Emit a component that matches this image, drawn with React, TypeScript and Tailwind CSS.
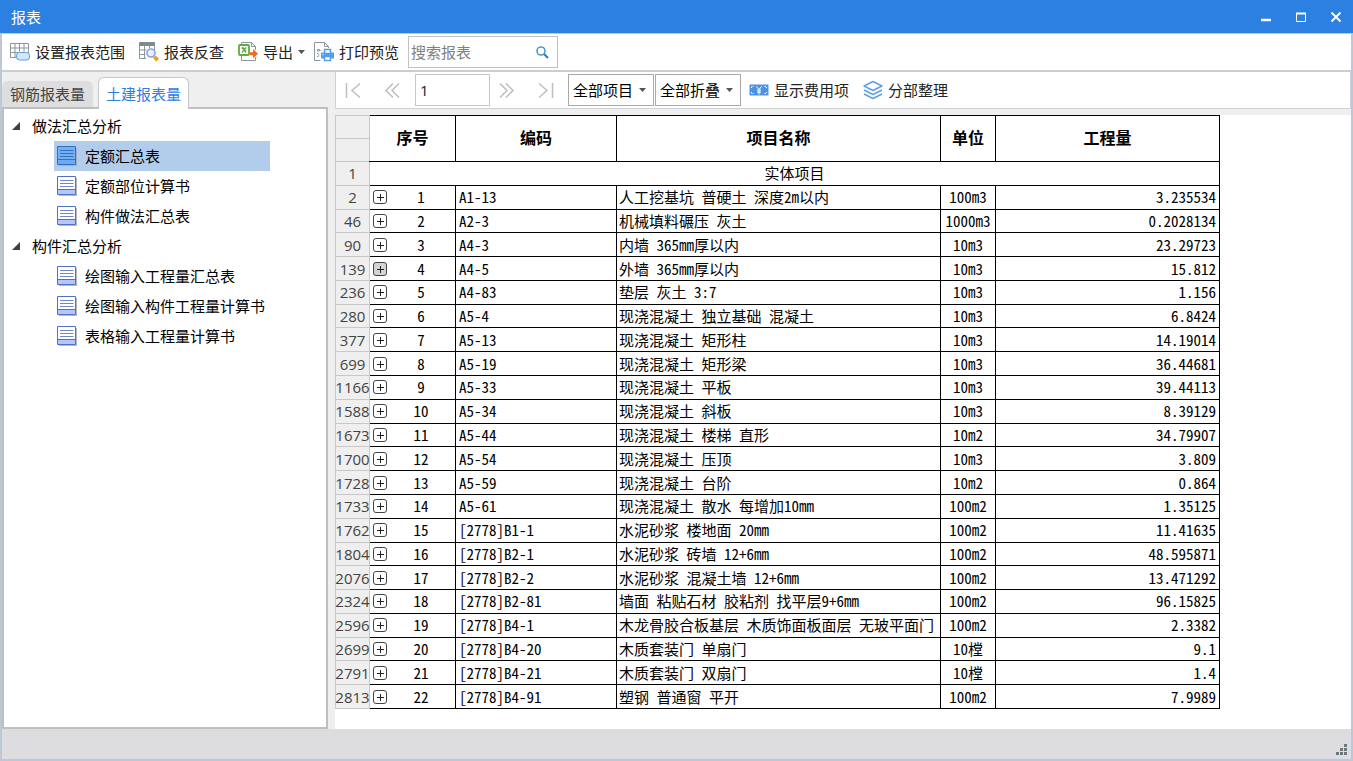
import { useState } from 'react';
import type { ReactNode } from 'react';
import clsx from 'clsx';

const TREE = [
  { title: '做法汇总分析', items: ['定额汇总表', '定额部位计算书', '构件做法汇总表'] },
  { title: '构件汇总分析', items: ['绘图输入工程量汇总表', '绘图输入构件工程量计算书', '表格输入工程量计算书'] },
];

// sheet row, code, name, unit, quantity
const ROWS: [number, string, string, string, string][] = [
  [2, 'A1-13', '人工挖基坑 普硬土 深度2m以内', '100m3', '3.235534'],
  [46, 'A2-3', '机械填料碾压 灰土', '1000m3', '0.2028134'],
  [90, 'A4-3', '内墙 365mm厚以内', '10m3', '23.29723'],
  [139, 'A4-5', '外墙 365mm厚以内', '10m3', '15.812'],
  [236, 'A4-83', '垫层 灰土 3:7', '10m3', '1.156'],
  [280, 'A5-4', '现浇混凝土 独立基础 混凝土', '10m3', '6.8424'],
  [377, 'A5-13', '现浇混凝土 矩形柱', '10m3', '14.19014'],
  [699, 'A5-19', '现浇混凝土 矩形梁', '10m3', '36.44681'],
  [1166, 'A5-33', '现浇混凝土 平板', '10m3', '39.44113'],
  [1588, 'A5-34', '现浇混凝土 斜板', '10m3', '8.39129'],
  [1673, 'A5-44', '现浇混凝土 楼梯 直形', '10m2', '34.79907'],
  [1700, 'A5-54', '现浇混凝土 压顶', '10m3', '3.809'],
  [1728, 'A5-59', '现浇混凝土 台阶', '10m2', '0.864'],
  [1733, 'A5-61', '现浇混凝土 散水 每增加10mm', '100m2', '1.35125'],
  [1762, '[2778]B1-1', '水泥砂浆 楼地面 20mm', '100m2', '11.41635'],
  [1804, '[2778]B2-1', '水泥砂浆 砖墙 12+6mm', '100m2', '48.595871'],
  [2076, '[2778]B2-2', '水泥砂浆 混凝土墙 12+6mm', '100m2', '13.471292'],
  [2324, '[2778]B2-81', '墙面 粘贴石材 胶粘剂 找平层9+6mm', '100m2', '96.15825'],
  [2596, '[2778]B4-1', '木龙骨胶合板基层 木质饰面板面层 无玻平面门', '100m2', '2.3382'],
  [2699, '[2778]B4-20', '木质套装门 单扇门', '10樘', '9.1'],
  [2791, '[2778]B4-21', '木质套装门 双扇门', '10樘', '1.4'],
  [2813, '[2778]B4-91', '塑钢 普通窗 平开', '100m2', '7.9989'],
];

const HOVERED_ROW = 139;

function RangeIcon() {
  return (
    <svg width="20" height="20" viewBox="0 0 20 20" fill="none" aria-hidden="true">
      <path d="M.5 1.5h18v11M.5 1.5v14h6M.5 6h18M.5 10.5h8M5 1.5v14M9.5 1.5v8M14 1.5v8" stroke="#8a979d" />
      <rect x="6.5" y="10.5" width="13" height="7.5" rx="3" fill="#d3e6fb" stroke="#5b9be6" />
    </svg>
  );
}

function LookupIcon() {
  return (
    <svg width="20" height="20" viewBox="0 0 20 20" fill="none" aria-hidden="true">
      <path d="M.5 .5h15v3H.5z" fill="#7c8b92" stroke="#7c8b92" />
      <path d="M.5 3.5v13H7M.5 8h7M.5 12.5h6M5.5 3.5v13M10.5 3.5v3M15.5 3.5V8" stroke="#8a979d" />
      <circle cx="12" cy="11" r="4" fill="#e6effc" stroke="#8e9fe0" strokeWidth="1.6" />
      <path d="m14 16 2.600-2.600 3.400 3.400-2.600 2.600z" fill="#f39a1c" />
    </svg>
  );
}

function ExportIcon() {
  return (
    <svg width="20" height="20" viewBox="0 0 20 20" fill="none" aria-hidden="true">
      <path d="M3.500 3V.500h10l4 4V8M13.500.500v4h4M3.500 14v4.500h14V15" stroke="#8a979d" />
      <rect x="1" y="3" width="10" height="10" rx="1" fill="#fff" stroke="#62a944" strokeWidth="1.800" />
      <path d="m3.800 5.500 4.500 5M8.300 5.500l-4.500 5M5 5.500l3 3.500" stroke="#62a944" strokeWidth="1.300" />
      <path d="M12 10.200h3V7l5 4.700-5 4.700v-3.200h-3z" fill="#f2691f" />
    </svg>
  );
}

function PrintPreviewIcon() {
  return (
    <svg width="20" height="20" viewBox="0 0 20 20" fill="none" aria-hidden="true">
      <path d="M14.500 6V4.500l-4-4H.500v18h6M10.500.500v4h4" stroke="#8a979d" />
      <path d="M3.500 7.500h2v1.500h-2zM3 11.500h1.500M5.500 13H4M3 14.500h1.500M7.500 8.500H6.500" stroke="#8a979d" />
      <path d="M7 10.500h13v6H7z" fill="#559de8" />
      <path d="M10.500 7.500h6v4h-6zM10.500 14.500h6v4h-6z" fill="#fff" stroke="#559de8" strokeWidth="1.500" />
      <path d="M8.500 12.700h1.200" stroke="#fff" />
    </svg>
  );
}

function MoneyIcon() {
  return (
    <svg width="20" height="20" viewBox="0 0 20 20" fill="none" aria-hidden="true">
      <path d="M.500 4.500h19v11H.500z" fill="#4a94e6" />
      <path d="M2.500 8V6.500h2M15.500 6.500h2V8M2.500 12v1.500h2M15.500 13.500h2V12" stroke="#fff" strokeDasharray="1.500 1" />
      <path d="M7.500 6.500 10 9.500l2.500-3M10 9.500v5M8 10.200h4M8 12.200h4" stroke="#fff" />
    </svg>
  );
}

function LayersIcon() {
  return (
    <svg width="20" height="20" viewBox="0 0 20 20" fill="none" stroke="#5b9fe8" strokeWidth="1.400" strokeLinejoin="round" aria-hidden="true">
      <path d="m10 1.500 9 4.500-9 4.500L1 6z" />
      <path d="m1 10 9 4.500 9-4.500M1 14l9 4.500 9-4.500" />
    </svg>
  );
}

function ReportIcon({ active }: { active: boolean }) {
  return (
    <svg width="20" height="20" viewBox="0 0 20 20" fill="none" aria-hidden="true">
      <path d="M2 20h18V2" stroke="#9aa3b5" strokeWidth="1.500" />
      <path d="M.500.500h18v18H.500z" fill={active ? '#74b0f2' : '#fff'} />
      <path d="M1 13.500h17.500v5H1z" fill={active ? '#6cabf3' : '#b5c6fa'} />
      <path d="M.500.500h18v18H.500zM.500 13.500h18" stroke={active ? '#2f72bd' : '#5070c4'} />
      <path d="M3 4.500h13.500M3 7.500h13.500M3 10.500h13.500" stroke={active ? '#2f72bd' : '#6f86c4'} />
    </svg>
  );
}

function Caret() {
  return (
    <svg width="7" height="4" viewBox="0 0 7 4" aria-hidden="true">
      <path d="M0 0h7L3.500 4z" fill="#555" />
    </svg>
  );
}

function ToolButton({ icon, label, caret }: { icon: ReactNode; label: string; caret?: boolean }) {
  return (
    <button
      type="button"
      className={clsx('flex h-8 items-center gap-[5px] whitespace-nowrap rounded-sm pl-[5px] hover:bg-gray-100', !caret && 'pr-[5px]')}
    >
      {icon}
      <span>{label}</span>
      {caret && <Caret />}
    </button>
  );
}

function NavButton({ label, d }: { label: string; d: string }) {
  return (
    <button type="button" aria-label={label} className="flex h-8 w-9 items-center pl-2">
      <svg width="17" height="17" viewBox="0 0 17 17" fill="none" stroke="#bcbec0" strokeWidth="1.500">
        <path d={d} />
      </svg>
    </button>
  );
}

function FilterSelect({ label, options }: { label: string; options: string[] }) {
  return (
    <div className="relative">
      <select
        aria-label={label}
        className="h-8 w-[86px] appearance-none border border-[#a9a9a9] bg-white pl-1 text-black focus:outline-none"
      >
        {options.map((o) => (
          <option key={o}>{o}</option>
        ))}
      </select>
      <span className="pointer-events-none absolute right-2 top-3.5">
        <Caret />
      </span>
    </div>
  );
}

function TitleBar() {
  return (
    <header className="flex h-[33px] shrink-0 items-center bg-[#2c80e2] pl-[11px] text-white">
      <h1 className="flex-1">报表</h1>
      <button type="button" aria-label="最小化" className="flex h-full w-[35px] items-center justify-center">
        <svg width="12" height="12" viewBox="0 0 12 12" fill="none" stroke="#fff">
          <path d="M1 9h10" strokeWidth="2.500" />
        </svg>
      </button>
      <button type="button" aria-label="最大化" className="flex h-full w-[35px] items-center justify-center">
        <svg width="12" height="12" viewBox="0 0 12 12" fill="none" stroke="#fff">
          <path d="M1.500 2v8.500h9V2" />
          <path d="M1 2.500h10" strokeWidth="2" />
        </svg>
      </button>
      <button type="button" aria-label="关闭" className="flex h-full w-[35px] items-center justify-center">
        <svg width="12" height="12" viewBox="0 0 12 12" fill="none" stroke="#fff" strokeWidth="1.800">
          <path d="m1.500 1.500 9 9M10.500 1.500l-9 9" />
        </svg>
      </button>
    </header>
  );
}

function Toolbar() {
  return (
    <div className="flex h-[39px] shrink-0 items-center gap-1 border-b-2 border-t border-b-[#c9cdd0] border-t-[#c4cad0] bg-white pl-[3px] text-[#222]">
      <ToolButton icon={<RangeIcon />} label="设置报表范围" />
      <ToolButton icon={<LookupIcon />} label="报表反查" />
      <ToolButton icon={<ExportIcon />} label="导出" caret />
      <ToolButton icon={<PrintPreviewIcon />} label="打印预览" />
      <label className="flex h-8 w-[150px] items-center border border-[#c0c0c0] pl-0.5 pr-2">
        <input
          type="text"
          aria-label="搜索报表"
          placeholder="搜索报表"
          className="w-full min-w-0 bg-transparent placeholder:text-[#808080] focus:outline-none"
        />
        <svg width="14" height="14" viewBox="0 0 14 14" fill="none" className="shrink-0" aria-hidden="true">
          <circle cx="6" cy="6" r="4" stroke="#4a9ccc" strokeWidth="1.600" />
          <path d="m9 9 4 4" stroke="#2f7fb5" strokeWidth="2.200" />
        </svg>
      </label>
    </div>
  );
}

function Sidebar() {
  const [tab, setTab] = useState('土建报表量');
  const [selected, setSelected] = useState('定额汇总表');

  return (
    <aside className="flex w-[326px] shrink-0 flex-col pt-[5px]">
      <div role="tablist" className="flex items-end gap-[5px]">
        {['钢筋报表量', '土建报表量'].map((t) => (
          <button
            key={t}
            type="button"
            role="tab"
            aria-selected={tab === t}
            onClick={() => setTab(t)}
            className={clsx(
              'rounded-t-md',
              tab === t
                ? 'z-10 -mb-0.5 h-8 border border-b-0 border-[#c6c8ca] bg-white px-[7px] text-[#2c80e2]'
                : 'h-[26px] bg-[#dedede] px-2 text-[#444]',
            )}
          >
            {t}
          </button>
        ))}
      </div>
      <nav className="flex-1 border-2 border-[#bdbfc1] bg-white pt-0.5 text-black">
        {TREE.map((group) => (
          <section key={group.title}>
            <button type="button" aria-expanded="true" className="flex h-[30px] items-center gap-3 pl-2">
              <svg width="8" height="8" viewBox="0 0 8 8" aria-hidden="true">
                <path d="M8 0v8H0z" fill="#404040" />
              </svg>
              <span>{group.title}</span>
            </button>
            <ul className="ml-[50px] w-[216px]">
              {group.items.map((item) => (
                <li key={item}>
                  <button
                    type="button"
                    onClick={() => setSelected(item)}
                    className={clsx('flex h-[30px] w-full items-center gap-2 whitespace-nowrap pl-[3px]', selected === item && 'bg-[#b2ccec]')}
                  >
                    <ReportIcon active={selected === item} />
                    <span>{item}</span>
                  </button>
                </li>
              ))}
            </ul>
          </section>
        ))}
      </nav>
    </aside>
  );
}

function SheetToolbar() {
  return (
    <div className="flex h-[37px] shrink-0 items-center gap-[3px] border border-t-0 border-[#cfd1d3] bg-white pl-px text-[#222]">
      <NavButton label="首页" d="M1.500 1v15M15 1.500 7 8.500l8 7" />
      <NavButton label="上一页" d="m9 1.500-7 7 7 7M15 1.500l-7 7 7 7" />
      <div className="flex items-center">
        <input
          type="text"
          aria-label="页码"
          defaultValue="1"
          className="h-8 w-[75px] border border-[#c4c6ca] bg-white px-1 font-['Open_Sans',sans-serif] focus:outline-none"
        />
        <NavButton label="下一页" d="m2 1.500 7 7-7 7M8 1.500l7 7-7 7" />
      </div>
      <NavButton label="末页" d="M15.500 1v15M2 1.500l8 7-8 7" />
      <div className="flex gap-px">
        <FilterSelect label="项目范围" options={['全部项目', '实体项目', '措施项目']} />
        <FilterSelect label="折叠方式" options={['全部折叠', '全部展开']} />
      </div>
      <div className="flex gap-1">
        <ToolButton icon={<MoneyIcon />} label="显示费用项" />
        <ToolButton icon={<LayersIcon />} label="分部整理" />
      </div>
    </div>
  );
}

function RowNumber({ children }: { children?: ReactNode }) {
  return (
    <th
      scope="row"
      className="whitespace-nowrap border border-[#c8c8c8] bg-[#efefef] font-['Open_Sans',sans-serif] font-normal text-[#444]"
    >
      <span className="flex justify-center">{children}</span>
    </th>
  );
}

function Sheet() {
  return (
    <table className="h-[594px] w-[884px] table-fixed border-collapse whitespace-nowrap bg-white leading-[22px] text-black [&_td]:border [&_td]:border-black">
      <colgroup>
        <col className="w-[34px]" />
        <col className="w-[86px]" />
        <col className="w-[161px]" />
        <col className="w-[324px]" />
        <col className="w-[55px]" />
        <col className="w-[224px]" />
      </colgroup>
      <thead>
        <tr className="h-[23px]">
          <td className="border-[#c8c8c8]! bg-[#efefef]" />
          {['序号', '编码', '项目名称', '单位', '工程量'].map((h) => (
            <th key={h} scope="col" rowSpan={2} className="border border-black pb-1 text-base font-bold first-of-type:border-l-0">
              {h}
            </th>
          ))}
        </tr>
        <tr className="h-[23px]">
          <td className="border-[#c8c8c8]! bg-[#efefef]" />
        </tr>
      </thead>
      <tbody className="[&_td]:[font-feature-settings:'hwid']">
        <tr>
          <RowNumber>1</RowNumber>
          <td colSpan={5} className="text-center">
            实体项目
          </td>
        </tr>
        {ROWS.map(([line, code, name, unit, amount], i) => (
          <tr key={line}>
            <RowNumber>{line}</RowNumber>
            <td>
              <div className="flex items-center pl-[3px]">
                <button
                  type="button"
                  aria-label="展开"
                  className={clsx('h-3.5 w-3.5 rounded-[3px] border border-[#444]', line === HOVERED_ROW && 'bg-[#d4d4d4]')}
                >
                  <svg width="12" height="12" viewBox="0 0 12 12" stroke="#222" aria-hidden="true">
                    <path d="M3 6.500h7M6.500 3v7" />
                  </svg>
                </button>
                <span className="flex-1 text-center">{i + 1}</span>
              </div>
            </td>
            <td className="pl-[3px]">{code}</td>
            <td className="pl-0.5">{name}</td>
            <td className="text-center">{unit}</td>
            <td className="pr-[3px] text-right">{amount}</td>
          </tr>
        ))}
      </tbody>
    </table>
  );
}

export default function App() {
  return (
    <div className="flex h-screen flex-col overflow-hidden bg-[#efefef] font-['Noto_Sans_CJK_SC',sans-serif] text-[15px] leading-[22px]">
      <TitleBar />
      <div className="flex min-h-0 flex-1 flex-col border-x-2 border-b-2 border-[#bfc6d6]">
        <Toolbar />
        <div className="flex min-h-0 flex-1 gap-[7px]">
          <Sidebar />
          <main className="flex min-w-0 flex-1 flex-col">
            <SheetToolbar />
            <div className="mt-1.5 min-h-0 flex-1 overflow-hidden bg-white">
              <Sheet />
            </div>
          </main>
        </div>
        <footer className="flex h-[30px] shrink-0 items-end justify-end bg-[#dddddf] p-[3px]">
          <svg width="12" height="12" viewBox="0 0 12 12" fill="#6d7780" aria-hidden="true">
            <path d="M8 0h3v3H8zM4 4h3v3H4zM8 4h3v3H8zM0 8h3v3H0zM4 8h3v3H4zM8 8h3v3H8z" />
          </svg>
        </footer>
      </div>
    </div>
  );
}
